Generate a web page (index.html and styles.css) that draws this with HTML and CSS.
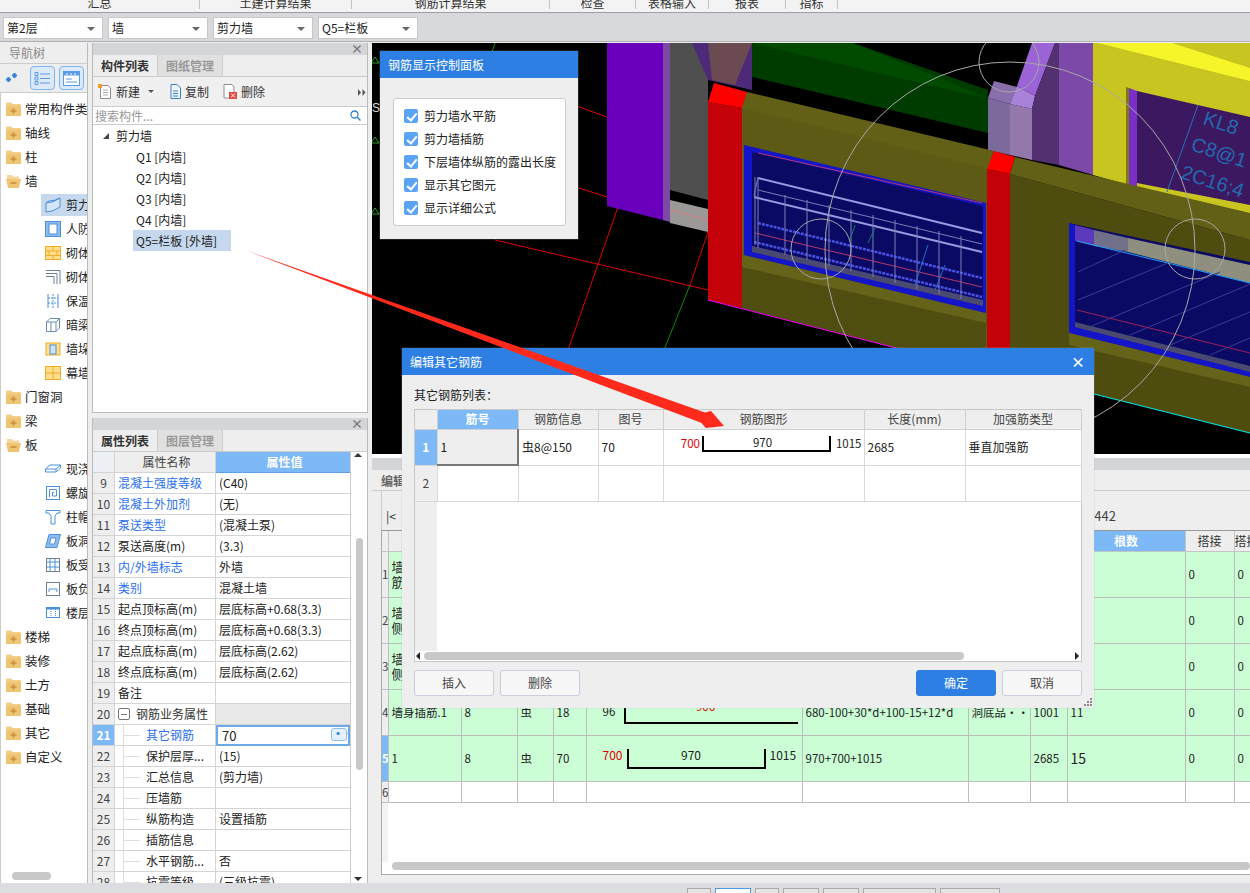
FILE: index.html
```html
<!DOCTYPE html>
<html lang="zh-CN">
<head>
<meta charset="utf-8">
<title>钢筋显示控制面板</title>
<link rel="stylesheet" href="styles.css">
</head>
<body>
<svg class="defs" width="0" height="0">
  <symbol id="fc" viewBox="0 0 15 14"><path d="M0 3 L0 1.5 Q0 .5 1 .5 L5 .5 L6.5 2 L14 2 Q15 2 15 3 L15 13 Q15 14 14 14 L1 14 Q0 14 0 13 Z" fill="#f3cf86"/><path d="M0 4 H15 V13 Q15 14 14 14 H1 Q0 14 0 13 Z" fill="#efc475"/><path d="M7.5 6 V12 M4.5 9 H10.5" stroke="#c9923b" stroke-width="1.6"/></symbol>
  <symbol id="fo" viewBox="0 0 15 14"><path d="M1 1 H6 L7 2.5 H13 V5 H1 Z" fill="#f3d79c"/><path d="M0 5 H15 L13 14 H2 Z" fill="#efc475"/><path d="M4.5 9 H10.5" stroke="#c9923b" stroke-width="1.6"/></symbol>
</svg>
<div class="app">
  <nav class="menubar">
    <span class="menu m1">汇总</span><span class="menu m2">土建计算结果</span><span class="menu m3">钢筋计算结果</span><span class="menu m4">检查</span><span class="menu m5">表格输入</span><span class="menu m6">报表</span><span class="menu m7">指标</span>
  </nav>
  <div class="selectbar">
    <div class="sel">第2层</div><div class="sel">墙</div><div class="sel">剪力墙</div><div class="sel">Q5=栏板</div>
  </div>
  <main class="main">
    <aside class="nav">
      <div class="nav-head">导航树</div>
      <div class="nav-tools">
        <svg class="nav-plus" width="13" height="12" viewBox="0 0 13 12"><path d="M3.500 5 V10 M1 7.500 H6 M9.500 1 V6 M7 3.500 H12" stroke="#2f7fd6" stroke-width="2.200"/></svg>
        <span class="nav-btn"><svg width="17" height="15" viewBox="0 0 17 15"><path d="M1 1.500h3v3H1zM1 6h3v3H1zM1 10.500h3v3H1z" fill="none" stroke="#5a9be6"/><path d="M6 3h10M6 7.500h10M6 12h10" stroke="#5a9be6"/></svg></span>
        <span class="nav-btn"><svg width="17" height="15" viewBox="0 0 17 15"><rect x=".5" y=".5" width="16" height="14" fill="#fff" stroke="#5a9be6"/><rect x=".5" y=".5" width="16" height="4" fill="#5a9be6"/><path d="M3 3h2M7 3h2M11 3h2" stroke="#fff"/><path d="M3 8h6M3 11h11" stroke="#5a9be6"/></svg></span>
      </div>
      <ul class="nav-tree">
        <li class="ni"><svg class="fi"><use href="#fc"/></svg>常用构件类型</li>
        <li class="ni"><svg class="fi"><use href="#fc"/></svg>轴线</li>
        <li class="ni"><svg class="fi"><use href="#fc"/></svg>柱</li>
        <li class="ni"><svg class="fi"><use href="#fo"/></svg>墙</li>
        <li class="ns on"><svg class="si" viewBox="0 0 16 16"><path d="M1 6 Q8 6 15 1 V10 Q8 15 1 15 Z M1 6 L4 4 Q10 4 15 1" fill="#d7e6f7" stroke="#4a90dc"/></svg>剪力墙</li>
        <li class="ns"><svg class="si" viewBox="0 0 16 16"><rect x=".5" y=".5" width="15" height="15" fill="#8fbcec" stroke="#4a90dc"/><rect x="4" y="3" width="8" height="10" fill="#fff" stroke="#4a90dc"/></svg>人防门框墙</li>
        <li class="ns"><svg class="si" viewBox="0 0 16 16"><rect x=".5" y="1.500" width="15" height="13" fill="#ffdf8f" stroke="#f0ad20"/><path d="M1 6h14M1 10.500h14M8 2v4M4 6v4.500M12 6v4.500M8 10.500v4" stroke="#f0ad20"/></svg>砌体墙</li>
        <li class="ns"><svg class="si" viewBox="0 0 16 16"><path d="M1 1.500H15V15M1 4.500H12V15M1 7.500H9V15" fill="none" stroke="#6d7f93"/></svg>砌体加筋</li>
        <li class="ns"><svg class="si" viewBox="0 0 16 16"><path d="M3 1v14M13 1v14" stroke="#4a90dc"/><path d="M8 1v14M3 5h10M3 10h10" stroke="#4a90dc" stroke-dasharray="2 1"/></svg>保温墙</li>
        <li class="ns"><svg class="si" viewBox="0 0 16 16"><path d="M1.500 5 L5 1.500 H14.500 V11 L11 14.500 H1.500 Z M1.500 5 H11 V14.500 M11 5 L14.500 1.500 M6 5 V14.500" fill="#fff" stroke="#6a8db5"/></svg>暗梁</li>
        <li class="ns"><svg class="si" viewBox="0 0 16 16"><rect x="1" y="2" width="14" height="12" fill="#ffdf8f" stroke="#f0ad20"/><rect x="5" y="4" width="6" height="9" fill="#cfe2f6" stroke="#4a90dc"/></svg>墙垛</li>
        <li class="ns"><svg class="si" viewBox="0 0 16 16"><rect x=".5" y="1.500" width="15" height="13" fill="#ffdf8f" stroke="#f0ad20"/><path d="M8 2v12M1 8h14" stroke="#f0ad20"/></svg>幕墙</li>
        <li class="ni"><svg class="fi"><use href="#fc"/></svg>门窗洞</li>
        <li class="ni"><svg class="fi"><use href="#fc"/></svg>梁</li>
        <li class="ni"><svg class="fi"><use href="#fo"/></svg>板</li>
        <li class="ns"><svg class="si" viewBox="0 0 16 16"><path d="M.5 8 L5 4 H15.500 V7 L11 11 H.5 Z M.5 8 H11 V11 M11 8 L15.500 4" fill="#fff" stroke="#4a90dc"/></svg>现浇板</li>
        <li class="ns"><svg class="si" viewBox="0 0 16 16"><rect x="1.500" y="1.500" width="13" height="13" fill="#fff" stroke="#4a90dc"/><path d="M4.500 12V4.500H11.500V11H7.500V7.500H9" fill="none" stroke="#4a90dc"/></svg>螺旋板</li>
        <li class="ns"><svg class="si" viewBox="0 0 16 16"><path d="M1 1.500H15V4H12L10 7V15H6V7L4 4H1Z" fill="#fff" stroke="#4a90dc"/></svg>柱帽</li>
        <li class="ns"><svg class="si" viewBox="0 0 16 16"><path d="M4 1.500H15.500L12 14.500H.5Z" fill="#8fbcec" stroke="#4a90dc"/><path d="M6 5H11L9.500 11H4.500Z" fill="#fff" stroke="#4a90dc"/></svg>板洞</li>
        <li class="ns"><svg class="si" viewBox="0 0 16 16"><rect x="1.500" y="1.500" width="13" height="13" fill="#fff" stroke="#6d7f93"/><path d="M5 2v12M10 2v12M2 5h12M2 10h12" stroke="#4a90dc"/></svg>板受力筋</li>
        <li class="ns"><svg class="si" viewBox="0 0 16 16"><rect x="1.500" y="1.500" width="13" height="13" fill="#fff" stroke="#6d7f93"/><path d="M4 8H12M4 8V11M12 8V11" fill="none" stroke="#4a90dc"/></svg>板负筋</li>
        <li class="ns"><svg class="si" viewBox="0 0 16 16"><rect x="1.500" y="2.500" width="13" height="10" fill="#fff" stroke="#4a90dc"/><rect x="1.500" y="2.500" width="13" height="2" fill="#4a90dc"/><path d="M6 4v8M10.500 4v8" stroke="#4a90dc" stroke-dasharray="1 1"/></svg>楼层板带</li>
        <li class="ni"><svg class="fi"><use href="#fc"/></svg>楼梯</li>
        <li class="ni"><svg class="fi"><use href="#fc"/></svg>装修</li>
        <li class="ni"><svg class="fi"><use href="#fc"/></svg>土方</li>
        <li class="ni"><svg class="fi"><use href="#fc"/></svg>基础</li>
        <li class="ni"><svg class="fi"><use href="#fc"/></svg>其它</li>
        <li class="ni"><svg class="fi"><use href="#fc"/></svg>自定义</li>
      </ul>
      <div class="nav-scroll"><span></span></div>
    </aside>

    <div class="midcol">
      <section class="panel list-panel">
        <div class="ptitle">×</div>
        <div class="ptabs"><span class="ptab on">构件列表</span><span class="ptab">图纸管理</span></div>
        <div class="ltools">
          <span class="lt"><svg width="14" height="15" viewBox="0 0 14 15"><path d="M2.500 1.500H10L12.500 4V14.500H2.500Z" fill="#fff" stroke="#8d8d8d"/><path d="M5 6h5M5 8.500h5M5 11h5" stroke="#a8a8a8"/><rect x="0" y="0" width="4" height="4" fill="#f29a2e"/></svg>新建<i class="caret"></i></span>
          <span class="lt"><svg width="13" height="15" viewBox="0 0 13 15"><path d="M3 .5H9L12.500 4V14.500H3Z" fill="#eef5fc" stroke="#3f7fc4"/><path d="M5 7h5M5 9.500h5M5 12h5" stroke="#3f7fc4"/></svg>复制</span>
          <span class="lt"><svg width="14" height="15" viewBox="0 0 14 15"><path d="M1 .5H9L11 3V14H1Z" fill="#fff" stroke="#8d8d8d"/><rect x="6" y="8" width="8" height="7" fill="#e0443e"/><path d="M8 9.500l4 4M12 9.500l-4 4" stroke="#fff"/></svg>删除</span>
          <svg class="lmore" width="8" height="7" viewBox="0 0 8 7"><path d="M0 0L3 3.500L0 7ZM4.500 0L7.500 3.500L4.500 7Z" fill="#555"/></svg>
        </div>
        <div class="lsearch"><span>搜索构件...</span><svg width="11" height="11" viewBox="0 0 11 11"><circle cx="4.500" cy="4.500" r="3.500" fill="none" stroke="#2f83c9" stroke-width="1.300"/><path d="M7 7l3.500 3.500" stroke="#2f83c9" stroke-width="1.500"/></svg></div>
        <ul class="ltree">
          <li class="lroot"><i class="tri"></i>剪力墙</li>
          <li class="litem">Q1 [内墙]</li>
          <li class="litem">Q2 [内墙]</li>
          <li class="litem">Q3 [内墙]</li>
          <li class="litem">Q4 [内墙]</li>
          <li class="litem sel-item">Q5=栏板 [外墙]</li>
        </ul>
      </section>

      <section class="panel prop-panel">
        <div class="ptitle">×</div>
        <div class="ptabs"><span class="ptab on">属性列表</span><span class="ptab">图层管理</span></div>
        <div class="prop-body">
          <div class="ptable">
            <div class="pr phead"><span class="pn"></span><span class="pk">属性名称</span><span class="pv">属性值</span></div>
            <div class="pr"><span class="pn">9</span><span class="pk link">混凝土强度等级</span><span class="pv">(C40)</span></div>
            <div class="pr"><span class="pn">10</span><span class="pk link">混凝土外加剂</span><span class="pv">(无)</span></div>
            <div class="pr"><span class="pn">11</span><span class="pk link">泵送类型</span><span class="pv">(混凝土泵)</span></div>
            <div class="pr"><span class="pn">12</span><span class="pk">泵送高度(m)</span><span class="pv">(3.3)</span></div>
            <div class="pr"><span class="pn">13</span><span class="pk link">内/外墙标志</span><span class="pv">外墙</span></div>
            <div class="pr"><span class="pn">14</span><span class="pk link">类别</span><span class="pv">混凝土墙</span></div>
            <div class="pr"><span class="pn">15</span><span class="pk">起点顶标高(m)</span><span class="pv">层底标高+0.68(3.3)</span></div>
            <div class="pr"><span class="pn">16</span><span class="pk">终点顶标高(m)</span><span class="pv">层底标高+0.68(3.3)</span></div>
            <div class="pr"><span class="pn">17</span><span class="pk">起点底标高(m)</span><span class="pv">层底标高(2.62)</span></div>
            <div class="pr"><span class="pn">18</span><span class="pk">终点底标高(m)</span><span class="pv">层底标高(2.62)</span></div>
            <div class="pr"><span class="pn">19</span><span class="pk">备注</span><span class="pv"></span></div>
            <div class="pr pgroup"><span class="pn">20</span><span class="pk"><i class="minus"></i>钢筋业务属性</span><span class="pv"></span></div>
            <div class="pr pcur"><span class="pn">21</span><span class="pk sub link">其它钢筋</span><span class="pv">70<i class="more">···</i></span></div>
            <div class="pr"><span class="pn">22</span><span class="pk sub">保护层厚...</span><span class="pv">(15)</span></div>
            <div class="pr"><span class="pn">23</span><span class="pk sub">汇总信息</span><span class="pv">(剪力墙)</span></div>
            <div class="pr"><span class="pn">24</span><span class="pk sub">压墙筋</span><span class="pv"></span></div>
            <div class="pr"><span class="pn">25</span><span class="pk sub">纵筋构造</span><span class="pv">设置插筋</span></div>
            <div class="pr"><span class="pn">26</span><span class="pk sub">插筋信息</span><span class="pv"></span></div>
            <div class="pr"><span class="pn">27</span><span class="pk sub">水平钢筋...</span><span class="pv">否</span></div>
            <div class="pr"><span class="pn">28</span><span class="pk sub">抗震等级</span><span class="pv">(三级抗震)</span></div>
          </div>
          <div class="vscroll"><i class="up"></i><span class="thumb"></span><i class="down"></i></div>
        </div>
      </section>
    </div>

    <div class="rightcol">
      <div class="canvas">
        <svg class="scene" width="878" height="411" viewBox="372 43 878 411">
          <rect x="372" y="43" width="878" height="411" fill="#000"/>
          <g fill="none" stroke="#e00000">
            <path d="M560 100L607 117M560 182L607 197M495 240L708 290M618 207L568 350M708 232L690 285"/>
          </g>
          <path d="M690 285L664 350" stroke="#0a8a0a" fill="none"/>
          <path d="M495 43L491 55" stroke="#0a8a0a" fill="none"/>
          <path d="M375 57l4 6h-8zM375 137l4 6h-8zM375 208l4 6h-8z" fill="none" stroke="#2aa02a"/>
          <text x="372" y="112" class="scene-s">S</text>
          <!-- back walls -->
          <polygon points="607,43 663,43 663,220 607,206" fill="#6a00bd"/>
          <polygon points="663,43 670,43 670,222 663,220" fill="#7b4aa4"/>
          <polygon points="670,43 708,43 708,200 670,190" fill="#4f4f4f"/>
          <polygon points="670,200 708,209 708,232 670,223" fill="#9c9898"/>
          <path d="M670 210L708 220" stroke="#d08080" fill="none"/>
          <polygon points="692,43 752,43 752,90 708,80" fill="#4c2a78"/>
          <polygon points="708,43 752,43 735,85 712,80" fill="#6b4a52"/>
          <polygon points="752,43 853,43 988,90 988,133 752,77" fill="#003c00"/>
          <polygon points="752,43 853,43 988,98 950,90" fill="#004b00"/>
          <!-- right back -->
          <polygon points="988,98 994,81 1017,87 1010,104" fill="#8a6fac"/>
          <polygon points="988,98 1010,104 1010,155 988,150" fill="#7d6a9c"/>
          <polygon points="1010,104 1032,109 1032,160 1010,155" fill="#9478ac"/>
          <polygon points="1017,86 1035,96 1032,109 1010,104" fill="#a882d8"/>
          <polygon points="1017,86 1032,43 1055,43 1035,96" fill="#9a63d6"/>
          <polygon points="1035,96 1055,43 1059,43 1059,165 1032,160 1032,109" fill="#53306f"/>
          <polygon points="1059,43 1093,43 1093,175 1059,165" fill="#7d49a8"/>
          <polygon points="1093,43 1250,43 1250,220 1093,175" fill="#c8c420"/>
          <polygon points="1098,43 1172,43 1250,68 1250,81" fill="#f5f52a"/>
          <polygon points="1126,87 1129,88 1129,185 1126,184" fill="#7d7a12"/>
          <polygon points="1129,88 1137,91 1137,187 1129,185" fill="#7c2fc8"/>
          <polygon points="1137,91 1250,117 1250,205 1137,183" fill="#3c1860"/>
          <path d="M1198 105L1167 192" stroke="#2a70b8" fill="none"/>
          <text class="scene-t" transform="translate(1202 124) rotate(18)">KL8</text>
          <text class="scene-t" transform="translate(1190 150) rotate(18)">C8@1</text>
          <text class="scene-t" transform="translate(1180 178) rotate(18)">2C16;4</text>
          <!-- left wall -->
          <polygon points="742,92 988,152 988,371 742,308" fill="#5c5a14"/>
          <polygon points="747,92 994,151 988,169 742,108" fill="#625f17"/>
          <polygon points="742,267 986,323 986,371 742,308" fill="#504d10"/>
          <polygon points="742,255 986,313 986,323 742,267" fill="#656219"/>
          <polygon points="744,145 986,203 986,313 744,255" fill="#1414c8"/>
          <polygon points="752,152 983,206 983,300 752,246" fill="#0a0a64"/>
          <polygon points="752,246 983,300 983,306 752,252" fill="#4a4a70"/>
          <g fill="none" stroke="#b8386a">
            <path d="M758 153L982 203M755 233L982 287"/>
          </g>
          <g fill="none" stroke="#9a9ae0" stroke-width="2">
            <path d="M758 178L982 233M754 197L982 252"/>
          </g>
          <g fill="none" stroke="#4a50e0" stroke-width="2.500" stroke-dasharray="3 1">
            <path d="M758 223L982 278M754 242L982 297"/>
          </g>
          <g fill="none" stroke="#7c7cb8">
            <path d="M755 177V245M758 178V248M785 195V255M807 200V260M829 205V266M851 210V271M873 215V277M895 220V283M917 226V289M939 231V294M961 236V299M754 196L758 177M758 190L982 244"/>
          </g>
          <path d="M855 225L850 240M875 228L868 243" stroke="#108060" fill="none"/>
          <path d="M928 245L915 285M945 265L935 290" stroke="#2070c0" fill="none"/>
          <!-- columns -->
          <polygon points="708,102 742,108 742,308 708,300" fill="#c40008"/>
          <polygon points="708,102 714,83 747,92 742,108" fill="#ff0000"/>
          <polygon points="987,169 1010,174 1010,375 987,370" fill="#c40008"/>
          <polygon points="987,169 994,151 1015,157 1010,174" fill="#ff0000"/>
          <!-- right wall -->
          <polygon points="1010,174 1250,240 1250,433 1010,373" fill="#4f4c0f"/>
          <polygon points="1010,174 1015,157 1250,213 1250,240" fill="#625f17"/>
          <polygon points="1069,223 1250,262 1250,372 1069,327" fill="#0a0a64"/>
          <polygon points="1075,225 1094,230 1094,246 1075,241" fill="#5a3ab8"/>
          <polygon points="1094,230 1128,238 1128,252 1094,246" fill="#70708a"/>
          <polygon points="1128,238 1250,265 1250,283 1128,252" fill="#8f8f7f"/>
          <path d="M1077 241L1250 283" stroke="#1ea0ff" fill="none"/>
          <g stroke="#3a3a98" fill="none">
            <path d="M1078 272L1125 250M1078 300L1170 262M1092 326L1220 272M1130 335L1250 284M1170 345L1250 312M1210 355L1250 338"/>
          </g>
          <path d="M1077 310L1250 353" stroke="#a0205a" fill="none"/>
          <polygon points="1075,322 1250,366 1250,372 1075,328" fill="#4a4a70"/>
          <polygon points="1069,223 1075,225 1075,327 1250,372 1250,377 1069,333" fill="#1414c8"/>
          <polygon points="1069,333 1250,377 1250,387 1069,345" fill="#656219"/>
          <path d="M708 300L904 350" stroke="#ff00ff" fill="none"/>
          <path d="M1094 394L1250 433" stroke="#00f0f0" fill="none"/>
          <!-- axis circles -->
          <g fill="none" stroke="#a8a8a8">
            <ellipse cx="1010" cy="250" rx="185" ry="188"/>
            <ellipse cx="821" cy="249" rx="30" ry="30"/>
            <ellipse cx="1195" cy="249" rx="30" ry="30"/>
            <ellipse cx="1009" cy="62" rx="30" ry="30"/>
          </g>
        </svg>
      </div>
      <section class="edit-panel">
        <div class="ptitle"></div>
        <div class="etabs"><span class="etab">编辑钢筋</span></div>
        <div class="etools"><span class="first">|&lt;</span><span class="etotal">442</span></div>
        <div class="ewrap">
          <table class="etable">
            <colgroup><col class="ec0"><col class="ec1"><col class="ec2"><col class="ec3"><col class="ec4"><col class="ec5"><col class="ec6"><col class="ec7"><col class="ec8"><col class="ec9"><col class="ec10"><col class="ec11"></colgroup>
            <thead><tr><th></th><th>筋号</th><th>直径</th><th>级别</th><th>图号</th><th>图形</th><th>计算公式</th><th>公式描述</th><th>长度</th><th class="hot">根数</th><th>搭接</th><th>搭接</th></tr></thead>
            <tbody>
              <tr class="r46"><td class="rn">1</td><td class="wrap">墙身水平<br>筋.1</td><td>8</td><td>虫</td><td>3</td><td></td><td></td><td></td><td></td><td></td><td>0</td><td>0</td></tr>
              <tr class="r46"><td class="rn">2</td><td class="wrap">墙身水平<br>侧.2</td><td>8</td><td>虫</td><td>3</td><td></td><td></td><td></td><td></td><td></td><td>0</td><td>0</td></tr>
              <tr class="r46"><td class="rn">3</td><td class="wrap">墙身垂直<br>侧.3</td><td>8</td><td>虫</td><td>18</td><td></td><td></td><td></td><td></td><td></td><td>0</td><td>0</td></tr>
              <tr class="r46"><td class="rn">4</td><td class="t-up">墙身插筋.1</td><td class="t-up">8</td><td class="t-up">虫</td><td class="t-up">18</td><td class="shape-cell"><div class="shape4"><span>96</span><div class="box4">906</div></div></td><td class="t-up">680-100+30*d+100-15+12*d</td><td class="t-up">洞底品···</td><td class="t-up">1001</td><td class="t-up">11</td><td>0</td><td>0</td></tr>
              <tr class="r46"><td class="rn rn-on">5</td><td>1</td><td>8</td><td>虫</td><td>70</td><td class="shape-cell"><div class="shape5"><span class="red">700</span><div class="box5">970</div><span class="n1015">1015</span></div></td><td>970+700+1015</td><td></td><td>2685</td><td class="big">15</td><td>0</td><td>0</td></tr>
              <tr class="r21"><td class="rn">6</td><td></td><td></td><td></td><td></td><td></td><td></td><td></td><td></td><td></td><td></td><td></td></tr>
            </tbody>
          </table>
          <div class="espace"></div>
          <div class="ehscroll"><span></span></div>
        </div>
      </section>
    </div>
  </main>
  <footer class="status">
    <span class="sb w24"></span><span class="sb w36 cur"></span><span class="sb w24"></span><span class="sb w36"></span><span class="sb w36"></span><span class="sb w73"></span><span class="sb w60"></span>
  </footer>

  <!-- floating control panel -->
  <aside class="ctrl">
    <header class="wtitle ctrl-title">钢筋显示控制面板</header>
    <div class="ctrl-body">
      <ul class="ctrl-box">
        <li><i class="ck"></i>剪力墙水平筋</li>
        <li><i class="ck"></i>剪力墙插筋</li>
        <li><i class="ck"></i>下层墙体纵筋的露出长度</li>
        <li><i class="ck"></i>显示其它图元</li>
        <li><i class="ck"></i>显示详细公式</li>
      </ul>
    </div>
  </aside>

  <!-- floating dialog -->
  <section class="dialog">
    <header class="wtitle dlg-title"><span>编辑其它钢筋</span><b class="dlg-x">×</b></header>
    <div class="dlg-body">
      <div class="dlg-label">其它钢筋列表：</div>
      <div class="dlg-grid">
        <table class="dtable">
          <colgroup><col class="dc0"><col class="dc1"><col class="dc2"><col class="dc3"><col class="dc4"><col class="dc5"><col class="dc6"></colgroup>
          <thead><tr><th></th><th class="hot">筋号</th><th>钢筋信息</th><th>图号</th><th>钢筋图形</th><th>长度(mm)</th><th>加强筋类型</th></tr></thead>
          <tbody>
            <tr><td class="rn rn-on">1</td><td class="cur-cell">1</td><td>虫8@150</td><td>70</td><td class="shape-cell"><div class="shape1"><span class="red">700</span><div class="box1">970</div><span class="n1015">1015</span></div></td><td>2685</td><td>垂直加强筋</td></tr>
            <tr><td class="rn">2</td><td></td><td></td><td></td><td></td><td></td><td></td></tr>
          </tbody>
        </table>
        <div class="dfill"></div>
        <div class="dscroll"><i class="al"></i><span></span><i class="ar"></i></div>
      </div>
      <div class="dlg-foot">
        <button class="btn">插入</button><button class="btn">删除</button>
        <span class="grow"></span>
        <button class="btn primary">确定</button><button class="btn">取消</button>
      </div>
      <svg class="grip" width="9" height="9" viewBox="0 0 9 9"><path d="M7 1h2v2H7zM4 4h2v2H4zM7 4h2v2H7zM1 7h2v2H1zM4 7h2v2H4zM7 7h2v2H7z" fill="#8a8a8a"/></svg>
    </div>
  </section>

  <!-- annotation arrow -->
  <svg class="arrow" width="1250" height="893" viewBox="0 0 1250 893">
    <polygon points="246,250.500 704.900,412.400 711,411 724,426 706,428 701.100,422.800" fill="#ff2a1c"/>
  </svg>
</div>
</body>
</html>
```
FILE: styles.css
```css
* { box-sizing: border-box; }
html, body { margin: 0; padding: 0; }
body { font: 12px/16px "Noto Sans CJK SC", "Liberation Sans", sans-serif; color: #222; background: #dcdde0; overflow: hidden; }
ul { list-style: none; margin: 0; padding: 0; }
i { font-style: normal; }
.defs { position: absolute; }
.app { position: relative; width: 1250px; height: 893px; overflow: hidden; display: flex; flex-direction: column; }

/* top menu */
.menubar { height: 13px; flex: none; display: flex; background: #f3f3f3; border-bottom: 1px solid #9d9fa3; overflow: hidden; }
.menu { display: block; height: 12px; line-height: 12px; margin-top: -3px; text-align: center; border-right: 1px solid #c4c4c4; font-size: 12px; color: #333; }
.m1 { width: 200px; } .m2 { width: 152px; } .m3 { width: 198px; } .m4 { width: 86px; } .m5 { width: 73px; } .m6 { width: 77px; } .m7 { width: 52px; }

/* selectors */
.selectbar { height: 29px; flex: none; display: flex; gap: 5px; padding: 4px 0 3px 3px; background: #d8d9dc; border-bottom: 1px solid #b0b1b4; }
.sel { width: 100px; height: 22px; line-height: 20px; padding-left: 3px; background: #fff; border: 1px solid #c8c8c8; position: relative; }
.sel::after { content: ""; position: absolute; right: 7px; top: 9px; border: 4px solid transparent; border-top-color: #666; border-bottom: 0; }

/* main */
.main { flex: 1; min-height: 0; display: flex; gap: 4px; padding-top: 1px; background: #eee; }

/* navigation */
.nav { width: 88px; flex: none; display: flex; flex-direction: column; background: #eee; border-right: 1px solid #bbb; overflow: hidden; }
.nav-head { height: 21px; line-height: 20px; padding-left: 9px; color: #888; border-bottom: 1px solid #ccc; }
.nav-tools { height: 29px; display: flex; align-items: center; gap: 4px; padding-left: 5px; border-bottom: 1px solid #ccc; }
.nav-plus { margin-right: 8px; }
.nav-btn { width: 25px; height: 24px; display: flex; align-items: center; justify-content: center; border: 1px solid #7cb4f0; border-radius: 4px; background: #dbe9f9; }
.nav-tree { flex: 1; background: #fff; padding-top: 4px; overflow: hidden; border-left: 1px solid #ccc; }
.ni, .ns { height: 24px; line-height: 24px; white-space: nowrap; overflow: hidden; display: flex; align-items: center; }
.ni { padding-left: 5px; font-size: 12.500px; }
.fi { width: 15px; height: 14px; margin-right: 4px; flex: none; }
.ns { margin-left: 40px; padding-left: 4px; gap: 5px; }
.ns.on { background: #c5d8ee; height: 22px; margin-top: 1px; margin-bottom: 1px; }
.si { width: 16px; height: 16px; flex: none; }
.nav-scroll { height: 11px; background: #fff; padding: 0 0 0 11px; border-left: 1px solid #ccc; }
.nav-scroll span { display: block; width: 39px; height: 8px; border-radius: 4px; background: #c8c8c8; }

/* middle */
.midcol { width: 276px; flex: none; display: flex; flex-direction: column; gap: 5px; }
.panel { border-left: 1px solid #bbb; border-right: 1px solid #bbb; background: #fff; display: flex; flex-direction: column; overflow: hidden; }
.list-panel { height: 370px; flex: none; border-bottom: 1px solid #bbb; }
.prop-panel { flex: 1; min-height: 0; }
.ptitle { height: 12px; flex: none; background: #d4d5d9; color: #777; text-align: right; padding-right: 4px; font-size: 12px; line-height: 11px; font-weight: bold; }
.ptabs { height: 22px; flex: none; display: flex; background: #eee; border-bottom: 1px solid #ccc; }
.ptab { width: 65px; line-height: 21px; text-align: center; color: #999; background: #e0e0e0; border-right: 1px solid #ccc; font-weight: bold; }
.ptab.on { color: #333; background: #eee; width: 65px; }
.ltools { height: 30px; flex: none; display: flex; align-items: center; background: #f0f0f0; padding-left: 5px; gap: 14px; position: relative; border-bottom: 1px solid #ccc; }
.lt { display: flex; align-items: center; gap: 4px; color: #333; }
.caret { width: 0; height: 0; margin-left: 4px; border: 3px solid transparent; border-top-color: #555; border-bottom: 0; }
.lmore { position: absolute; right: 1px; top: 12px; }
.lsearch { height: 18px; flex: none; display: flex; align-items: center; justify-content: space-between; padding: 0 6px 0 2px; color: #999; border-bottom: 1px solid #ccc; }
.ltree { flex: 1; }
.lroot { height: 21px; line-height: 21px; padding-left: 10px; display: flex; align-items: center; gap: 7px; }
.tri { width: 0; height: 0; border-style: solid; border-width: 0 0 6px 6px; border-color: transparent transparent #444 transparent; }
.litem { height: 21px; line-height: 21px; margin-left: 40px; padding-left: 3px; width: 98px; white-space: nowrap; }
.sel-item { background: #c5d8ee; }

.prop-body { flex: 1; min-height: 0; display: flex; overflow: hidden; }
.ptable { width: 258px; flex: none; border-right: 1px solid #ccc; }
.pr { height: 21px; display: flex; }
.pr > span { display: block; line-height: 20px; border-bottom: 1px solid #d4d4d4; white-space: nowrap; overflow: hidden; }
.pn { width: 22px; flex: none; text-align: center; background: #eee; border-right: 1px solid #d4d4d4; color: #444; }
.pk { width: 101px; flex: none; padding-left: 3px; border-right: 1px solid #d4d4d4; }
.pv { flex: 1; padding-left: 3px; }
.link { color: #2a6ff0; }
.phead > span { background: #eee; text-align: center; color: #444; }
.phead .pn { background: #edf0f5; }
.phead .pv { background: #7db8f7; color: #fff; font-weight: bold; border-bottom: 1px solid #62a0e6; }
.pgroup .pv { background: #e8e8e8; }
.pgroup .pk { display: flex; align-items: center; padding-left: 3px; color: #333; }
.minus { width: 12px; height: 12px; margin-right: 6px; border: 1px solid #777; border-radius: 2px; background: linear-gradient(#777, #777) center / 6px 1px no-repeat #fff; flex: none; }
.sub { padding-left: 31px !important; position: relative; }
.sub::before { content: ""; position: absolute; left: 8px; top: 0; bottom: 0; width: 1px; background: #ddd; }
.sub::after { content: ""; position: absolute; left: 9px; top: 10px; width: 16px; height: 1px; background: #ddd; }
.pcur .pn { background: #7db8f7; color: #fff; font-weight: bold; }
.pcur .pv { position: relative; padding-left: 4px; font-size: 13px; border: 2px solid #6ea9e8 !important; line-height: 17px !important; }
.more { position: absolute; right: 1px; top: 1px; width: 16px; height: 13px; line-height: 9px; text-align: center; border: 1px solid #8dbdf0; border-radius: 3px; background: #e6f0fb; color: #3a7fd0; font-size: 12px; font-weight: bold; letter-spacing: -1px; }
.vscroll { flex: 1; position: relative; background: #fff; }
.thumb { position: absolute; left: 5px; top: 86px; width: 7px; height: 232px; border-radius: 4px; background: #c8c8c8; }
.up, .down { position: absolute; left: 3px; border: 4px solid transparent; }
.up { top: 1px; border-bottom-color: #333; border-top: 0; }
.down { bottom: 2px; border-top-color: #333; border-bottom: 0; }

/* right column */
.rightcol { flex: 1; min-width: 0; display: flex; flex-direction: column; gap: 4px; background: #fff; }
.canvas { height: 411px; flex: none; overflow: hidden; }
.scene { display: block; }
.scene-s { fill: #ddd; font: 12px "Liberation Sans", sans-serif; }
.scene-t { fill: #2468ae; font: 20px "Liberation Sans", sans-serif; }

.edit-panel { flex: 1; min-height: 0; display: flex; flex-direction: column; background: #eee; overflow: hidden; }
.etabs { height: 21px; flex: none; border-bottom: 1px solid #ccc; padding-left: 9px; }
.etab { line-height: 21px; color: #666; font-weight: bold; }
.etools { height: 39px; flex: none; display: flex; justify-content: space-between; align-items: flex-end; padding: 0 0 6px 4px; margin-left: 9px; border-left: 1px solid #ccc; }
.first { color: #333; }
.etotal { margin-right: 134px; color: #444; font-size: 13px; }
.ewrap { margin-left: 9px; height: 345px; flex: none; border-left: 1px solid #aaa; border-top: 1px solid #999; border-bottom: 1px solid #aaa; background: #fff; display: flex; flex-direction: column; }
.etable { table-layout: fixed; border-collapse: collapse; width: 868px; flex: none; font-size: 11.500px; }
.ec0 { width: 6px; } .ec1 { width: 73px; } .ec2 { width: 56px; } .ec3 { width: 36px; } .ec4 { width: 33px; } .ec5 { width: 216px; } .ec6 { width: 166px; } .ec7 { width: 62px; } .ec8 { width: 37px; } .ec9 { width: 118px; } .ec10 { width: 49px; } .ec11 { width: 16px; }
.etable th { height: 20px; padding: 0; font-weight: normal; font-size: 12px; text-align: center; background: #eee; border: 1px solid #c4c4c4; border-width: 0 1px 1px 0; overflow: hidden; white-space: nowrap; color: #333; }
.etable th.hot, .dtable th.hot { background: #7db8f7; color: #fff; font-weight: bold; }
.etable td { padding: 0 0 0 3px; background: #ccfed6; border: 1px solid #bdbdbd; overflow: hidden; white-space: nowrap; color: #222; }
.etable .r46 td { height: 46px; }
.etable .r21 td { height: 21px; background: #fff; }
.etable td.rn { padding: 0; background: #eee; text-align: center; color: #444; border-left: 0; }
.wrap { line-height: 15px; font-size: 13px; }
.t-up { vertical-align: top; padding-top: 14px !important; line-height: 16px; }
.big { font-size: 14px; }
.red { color: #e00000; }
.shape-cell { position: relative; }
.shape5 { display: flex; align-items: flex-start; height: 24px; margin-left: 13px; font-size: 12px; }
.shape5 .red { width: 24px; line-height: 18px; }
.box5 { width: 139px; height: 20px; margin-top: 3px; padding-right: 10px; border: 2px solid #000; border-top: 0; text-align: center; line-height: 12px; font-size: 12px; }
.n1015 { margin-left: 4px; line-height: 18px; }
.shape4 { display: flex; height: 36px; margin-top: -7px; margin-left: 13px; }
.shape4 span { width: 21px; line-height: 28px; padding-top: 6px; }
.box4 { width: 174px; height: 24px; margin-top: 9px; padding-right: 12px; border: 2px solid #000; border-top: 0; border-right: 0; text-align: center; color: #e00000; line-height: 12px; }
.espace { flex: 1; border-left: 6px solid #f3f3f3; }
.ehscroll { height: 12px; flex: none; padding: 0 0 2px 10px; }
.ehscroll span { display: block; height: 8px; background: #c8c8c8; border-radius: 4px; }
.status { height: 10px; flex: none; display: flex; gap: 4px; padding: 5px 0 0 687px; background: #dcdde0; overflow: hidden; }
.sb { display: block; height: 8px; background: #e3e3e3; border: 1px solid #aaa; flex: none; }
.w24 { width: 24px; } .w36 { width: 36px; } .w73 { width: 73px; } .w60 { width: 60px; }
.sb.cur { background: #fff; border-color: #4a9be8; }

/* windows */
.wtitle { background: #2d7fe3; color: #fff; }
.ctrl { position: absolute; left: 380px; top: 51px; width: 198px; height: 188px; background: #eee; display: flex; flex-direction: column; box-shadow: 0 0 1px #bbb; }
.ctrl-title { height: 27px; line-height: 27px; padding-left: 8px; flex: none; }
.ctrl-body { padding: 20px 12px 0 13px; }
.ctrl-box { height: 128px; background: #fff; border: 1px solid #ccc; border-radius: 3px; padding: 5px 0 0 10px; }
.ctrl-box li { height: 23px; display: flex; align-items: center; gap: 6px; white-space: nowrap; }
.ck { width: 14px; height: 14px; border-radius: 2px; background: #5ba3f5; position: relative; flex: none; }
.ck::after { content: ""; position: absolute; left: 5px; top: 2px; width: 4px; height: 8px; border: solid #fff; border-width: 0 2px 2px 0; transform: rotate(40deg); }

.dialog { position: absolute; left: 402px; top: 348px; width: 692px; height: 360px; background: #eee; display: flex; flex-direction: column; box-shadow: 0 0 1px #aab; }
.dlg-title { height: 27px; line-height: 27px; padding: 0 9px 0 8px; flex: none; display: flex; justify-content: space-between; }
.dlg-x { font-size: 14px; font-weight: bold; }
.dlg-body { flex: 1; position: relative; padding: 0 12px 0 12px; display: flex; flex-direction: column; }
.dlg-label { height: 34px; line-height: 40px; flex: none; }
.dlg-grid { height: 253px; flex: none; background: #fff; border: 1px solid #c8c8c8; display: flex; flex-direction: column; }
.dtable { table-layout: fixed; border-collapse: collapse; width: 666px; flex: none; }
.dc0 { width: 22px; } .dc1 { width: 81px; } .dc2 { width: 80px; } .dc3 { width: 65px; } .dc4 { width: 201px; } .dc5 { width: 101px; } .dc6 { width: 116px; }
.dtable th { height: 19px; padding: 0; font-weight: normal; background: #eee; border: 1px solid #d0d0d0; border-width: 0 1px 1px 0; color: #444; text-align: center; line-height: 14px; }
.dtable td { height: 36px; padding: 0 0 0 3px; border: 1px solid #d8d8d8; white-space: nowrap; overflow: hidden; color: #222; }
.dtable td.rn { padding: 0; background: #eee; text-align: center; color: #444; border-left: 0; }
.etable td.rn-on, .dtable td.rn-on { background: #7db8f7; color: #fff; font-weight: bold; }
.cur-cell { background: #eee; border-right: 2px solid #777 !important; border-bottom: 2px solid #777 !important; }
.shape1 { display: flex; align-items: flex-start; height: 22px; justify-content: flex-end; padding-right: 2px; font-size: 11.500px; }
.shape1 .red { line-height: 15px; margin-right: 2px; }
.box1 { width: 129px; height: 16px; margin-top: 0; padding-right: 8px; border: 2px solid #000; border-top: 0; text-align: center; line-height: 13px; }
.shape1 .n1015 { line-height: 15px; margin-left: 5px; }
.dfill { flex: 1; width: 22px; background: #eee; }
.dscroll { height: 10px; flex: none; position: relative; padding: 1px 8px 1px 9px; }
.dscroll span { display: block; width: 540px; height: 8px; border-radius: 4px; background: #c8c8c8; }
.al, .ar { position: absolute; top: 1px; border: 4px solid transparent; }
.al { left: 1px; border-right-color: #222; border-left: 0; }
.ar { right: 2px; border-left-color: #222; border-right: 0; }
.dlg-foot { display: flex; gap: 6px; padding-top: 8px; }
.grow { flex: 1; }
.btn { width: 80px; height: 26px; padding: 0; background: #f7f7f7; color: #444; border: 1px solid #c8cede; border-radius: 3px; font: inherit; }
.btn.primary { background: #2d7fe3; border-color: #2d7fe3; color: #fff; }
.grip { position: absolute; right: 2px; bottom: 2px; }
.arrow { position: absolute; left: 0; top: 0; pointer-events: none; }
```
